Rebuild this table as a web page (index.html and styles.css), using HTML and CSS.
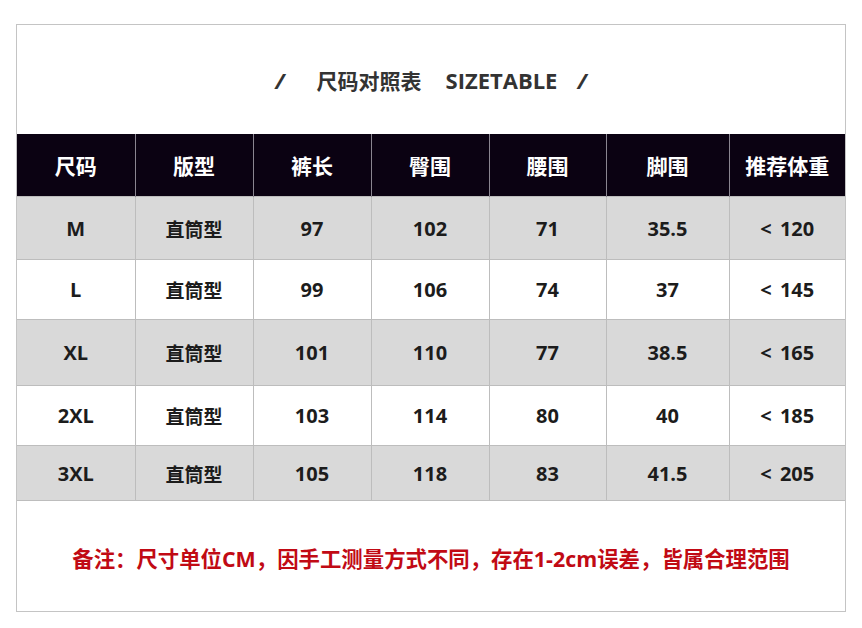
FILE: index.html
```html
<!DOCTYPE html>
<html lang="zh">
<head>
<meta charset="utf-8">
<title>尺码对照表</title>
<link rel="stylesheet" href="styles.css">
</head>
<body>
<div class="sheet">
  <div class="title">
    <span class="slash">/</span>
    <span class="cn">尺码对照表</span>
    <span class="en">SIZETABLE</span>
    <span class="slash">/</span>
  </div>
  <table class="sizes">
    <colgroup>
      <col class="c1"><col class="c2"><col class="c3"><col class="c4"><col class="c5"><col class="c6"><col class="c7">
    </colgroup>
    <thead>
      <tr><th>尺码</th><th>版型</th><th>裤长</th><th>臀围</th><th>腰围</th><th>脚围</th><th>推荐体重</th></tr>
    </thead>
    <tbody>
      <tr class="gray r1"><td>M</td><td>直筒型</td><td>97</td><td>102</td><td>71</td><td>35.5</td><td>&lt; 120</td></tr>
      <tr class="white r2"><td>L</td><td>直筒型</td><td>99</td><td>106</td><td>74</td><td>37</td><td>&lt; 145</td></tr>
      <tr class="gray r3"><td>XL</td><td>直筒型</td><td>101</td><td>110</td><td>77</td><td>38.5</td><td>&lt; 165</td></tr>
      <tr class="white r4"><td>2XL</td><td>直筒型</td><td>103</td><td>114</td><td>80</td><td>40</td><td>&lt; 185</td></tr>
      <tr class="gray r5"><td>3XL</td><td>直筒型</td><td>105</td><td>118</td><td>83</td><td>41.5</td><td>&lt; 205</td></tr>
    </tbody>
  </table>
  <div class="note">备注：尺寸单位CM，因手工测量方式不同，存在1-2cm误差，皆属合理范围</div>
</div>
</body>
</html>
```
FILE: styles.css
```css
html, body {
  margin: 0;
  padding: 0;
  background: #ffffff;
}
body {
  font-family: "Open Sans", "Noto Sans CJK SC", sans-serif;
}
.sheet {
  margin: 24px 0 0 16px;
  width: 828px;
  height: 586px;
  border: 1px solid #c4c4c4;
  display: flex;
  flex-direction: column;
}
.title {
  height: 109px;
  display: flex;
  align-items: center;
  justify-content: center;
  font-weight: 700;
  font-size: 22px;
  color: #333333;
  font-family: "Open Sans", "Noto Sans CJK SC", sans-serif;
  padding: 0 0 0 0;
  box-sizing: border-box;
}
.title .slash { font-style: italic; font-weight: 700; }
.title .cn { margin-left: 32px; font-size: 21px; font-family: "Noto Sans CJK SC", sans-serif; }
.title .en { margin-left: 24px; margin-right: 20px; }
.sizes {
  width: 828px;
  border-collapse: collapse;
  table-layout: fixed;
}
.c1 { width: 118px; }
.c2 { width: 118px; }
.c3 { width: 118px; }
.c4 { width: 118px; }
.c5 { width: 117px; }
.c6 { width: 123px; }
.c7 { width: 116px; }
.sizes th {
  background: #0b0212;
  color: #ffffff;
  font-family: "Noto Sans CJK SC", sans-serif;
  font-weight: 700;
  font-size: 21px;
  height: 62px;
  padding: 0;
  border-left: 1px solid #8a8590;
}
.sizes th:first-child { border-left: none; }
.sizes td {
  text-align: center;
  font-weight: 700;
  font-size: 20px;
  color: #1c1c1c;
  padding: 0;
  border: 1px solid #bdbdbd;
}
.sizes td:first-child { border-left: none; }
.sizes td:last-child { border-right: none; word-spacing: 3px; }
.sizes td:nth-child(2) { font-family: "Noto Sans CJK SC", sans-serif; font-size: 19px; }
.gray td { background: #d9d9d9; }
.white td { background: #ffffff; }
.r1 td { height: 62px; }
.r2 td { height: 59px; }
.r3 td { height: 65px; }
.r4 td { height: 59px; }
.r5 td { height: 54px; }
.note {
  flex: 1;
  display: flex;
  align-items: center;
  justify-content: center;
  color: #c10a14;
  font-weight: 700;
  font-size: 21.4px;
  font-family: "Open Sans", "Noto Sans CJK SC", sans-serif;
  padding-top: 2px;
}
```
